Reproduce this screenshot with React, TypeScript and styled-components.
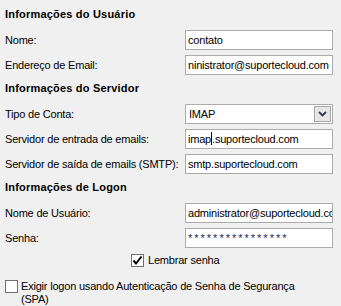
import styled, { createGlobalStyle } from "styled-components";

const Global = createGlobalStyle`
  html, body {
    margin: 0;
    padding: 0;
    background: #f0f0f0;
  }
  body {
    font-family: "Liberation Sans", Arial, sans-serif;
    font-size: 11px;
    letter-spacing: -0.2px;
    color: #000;
  }
`;

export default function App() {
  return (
    <>
      <Global />
      <Panel>
        <Header $first>Informações do Usuário</Header>
        <Row>
          <Label>Nome:</Label>
          <Field>contato</Field>
        </Row>
        <Row>
          <Label>Endereço de Email:</Label>
          <Field>ninistrator@suportecloud.com</Field>
        </Row>

        <Header>Informações do Servidor</Header>
        <Row>
          <Label>Tipo de Conta:</Label>
          <Select>
            <span>IMAP</span>
            <DropButton>
              <svg width="9" height="6" viewBox="0 0 9 6">
                <path
                  d="M1 1 L4.5 4.5 L8 1"
                  fill="none"
                  stroke="#2b3a5a"
                  strokeWidth="1.8"
                />
              </svg>
            </DropButton>
          </Select>
        </Row>
        <Row>
          <Label>Servidor de entrada de emails:</Label>
          <Field>
            imap<Caret />.suportecloud.com
          </Field>
        </Row>
        <Row>
          <Label>Servidor de saída de emails (SMTP):</Label>
          <Field>smtp.suportecloud.com</Field>
        </Row>

        <Header>Informações de Logon</Header>
        <Row>
          <Label>Nome de Usuário:</Label>
          <Field>administrator@suportecloud.com</Field>
        </Row>
        <Row>
          <Label>Senha:</Label>
          <Field $password>****************</Field>
        </Row>
        <CheckRow>
          <Box>
            <svg width="11" height="11" viewBox="0 0 11 11">
              <path
                d="M1.5 5.5 L4 8.5 L9.5 1.5"
                fill="none"
                stroke="#000"
                strokeWidth="2"
              />
            </svg>
          </Box>
          <span>Lembrar senha</span>
        </CheckRow>
        <SpaRow>
          <Box />
          <SpaText>
            Exigir logon usando Autenticação de Senha de Segurança (SPA)
          </SpaText>
        </SpaRow>
      </Panel>
    </>
  );
}

const Panel = styled.div`
  width: 341px;
  height: 306px;
  box-sizing: border-box;
  padding: 0 8px 0 5px;
  display: flex;
  flex-direction: column;
  overflow: hidden;
`;

const Header = styled.div<{ $first?: boolean }>`
  font-weight: bold;
  letter-spacing: 0.2px;
  height: 22px;
  line-height: 22px;
  margin-top: ${(p) => (p.$first ? "3px" : "0")};
  margin-bottom: 2px;
`;

const Row = styled.div`
  height: 25px;
  display: flex;
  align-items: center;
`;

const Label = styled.div`
  width: 180px;
  flex: none;
  white-space: nowrap;
`;

const Field = styled.div<{ $password?: boolean }>`
  width: 149px;
  height: 20px;
  box-sizing: border-box;
  border: 1px solid #ababab;
  background: #fff;
  padding: 0 2px;
  line-height: 18px;
  white-space: nowrap;
  overflow: hidden;
  color: ${(p) => (p.$password ? "#1c2a60" : "#000")};
  letter-spacing: ${(p) => (p.$password ? "2px" : "-0.2px")};
`;

const Caret = styled.span`
  display: inline-block;
  width: 1px;
  height: 13px;
  background: #000;
  vertical-align: -2px;
`;

const Select = styled.div`
  width: 149px;
  height: 20px;
  box-sizing: border-box;
  border: 1px solid #ababab;
  background: #fff;
  padding: 0 1px 0 3px;
  display: flex;
  align-items: center;
  justify-content: space-between;
`;

const DropButton = styled.div`
  width: 17px;
  height: 16px;
  box-sizing: border-box;
  border: 1px solid #a8a8a8;
  background: #e6e6e6;
  display: flex;
  align-items: center;
  justify-content: center;
`;

const CheckRow = styled.div`
  height: 20px;
  display: flex;
  align-items: center;
  gap: 4px;
  padding-left: 126px;
`;

const Box = styled.div`
  width: 13px;
  height: 13px;
  box-sizing: border-box;
  border: 1px solid #707070;
  background: #fff;
  display: flex;
  align-items: center;
  justify-content: center;
  flex: none;
`;

const SpaRow = styled.div`
  margin-top: 10px;
  display: flex;
  align-items: flex-start;
  gap: 3px;
`;

const SpaText = styled.div`
  line-height: 13px;
  width: 292px;
`;
